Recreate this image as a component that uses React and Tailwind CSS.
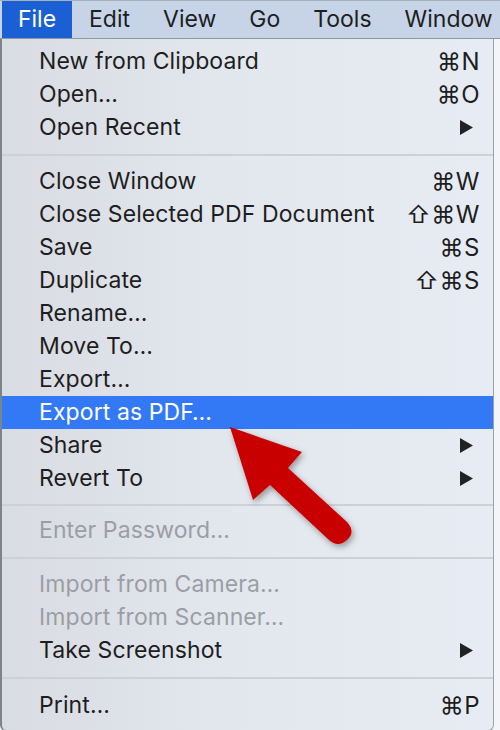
const items = [
  { label: "New from Clipboard", key: "⌘N" },
  { label: "Open…", key: "⌘O" },
  { label: "Open Recent", sub: true },
  { sep: "h-[21px]" },
  { label: "Close Window", key: "⌘W" },
  { label: "Close Selected PDF Document", key: "⇧⌘W" },
  { label: "Save", key: "⌘S" },
  { label: "Duplicate", key: "⇧⌘S" },
  { label: "Rename…" },
  { label: "Move To…" },
  { label: "Export…" },
  { label: "Export as PDF…", active: true },
  { label: "Share", sub: true },
  { label: "Revert To", sub: true },
  { sep: "h-[19px]" },
  { label: "Enter Password…", disabled: true },
  { sep: "h-[21px]" },
  { label: "Import from Camera…", disabled: true },
  { label: "Import from Scanner…", disabled: true },
  { label: "Take Screenshot", sub: true },
  { sep: "h-[22px]" },
  { label: "Print…", key: "⌘P" },
];

const menus = ["Edit", "View", "Go", "Tools", "Window"];

function Row({ item }) {
  if (item.sep) {
    return (
      <div className={`flex items-center ${item.sep}`}>
        <div className="h-[2px] w-full bg-[#cdd1d7]" />
      </div>
    );
  }
  const color = item.active ? "text-white" : item.disabled ? "text-[#9b9ea4]" : "text-[#1e1e1e]";
  return (
    <div className={`flex h-[33px] items-center pl-[37px] pr-[13px] ${item.active ? "bg-[#3379f5]" : ""} ${color}`}>
      <span className="flex-1 tracking-[0.1px]">{item.label}</span>
      {item.key ? <span className="text-[24px] tracking-[0.5px]">{item.key}</span> : null}
      {item.sub ? (
        <svg width="13" height="15" viewBox="0 0 13 15" className="mr-[7px]">
          <path d="M0 0 L13 7.5 L0 15 Z" fill={item.active ? "#fff" : "#222"} />
        </svg>
      ) : null}
    </div>
  );
}

export default function App() {
  return (
    <div className="relative h-[730px] w-[500px] overflow-hidden bg-[#f3f5f8] text-[23px] font-['Inter','Liberation_Sans',sans-serif]">
      <div className="flex h-[39px] items-center border-t border-[#a9b0ba] border-b border-b-[#8c96a6] bg-[#c7d4e8] text-[#1e1e1e]">
        <div className="ml-[2px] flex h-full w-[70px] items-center justify-center bg-[#1b5fd4] text-white">File</div>
        <div className="ml-[17px] flex gap-[33px]">
          {menus.map((m) => (
            <span key={m}>{m}</span>
          ))}
        </div>
      </div>

      <div className="w-[494px] rounded-b-[6px] border-l-2 border-r border-b border-[#9ca2ab] border-l-[#7d838c] bg-gradient-to-r from-[#d9dce2] via-[#e3e8ef] to-[#e7ecf4] pt-[6px] pb-[8px]">
        {items.map((item, i) => (
          <Row key={i} item={item} />
        ))}
      </div>

      <svg className="absolute left-0 top-0" width="500" height="730" viewBox="0 0 500 730">
        <defs>
          <filter id="sh" x="-20%" y="-20%" width="140%" height="140%">
            <feDropShadow dx="2" dy="3" stdDeviation="3" floodColor="#000" floodOpacity="0.35" />
          </filter>
        </defs>
        <g filter="url(#sh)" fill="#c90000">
          <path d="M230 427 L302 452 L288 468 L347 522 Q356 532 347 540 Q338 548 329 540 L270 485 L253 500 Z" />
        </g>
      </svg>
    </div>
  );
}
